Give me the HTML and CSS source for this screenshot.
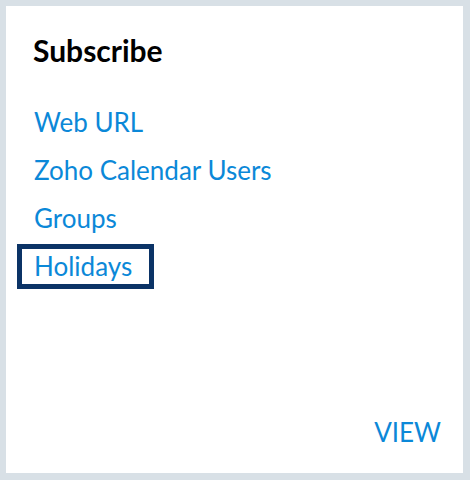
FILE: index.html
```html
<!DOCTYPE html>
<html>
<head>
<meta charset="utf-8">
<link rel="stylesheet" href="styles.css">
</head>
<body>
<div class="card">
  <h2 class="title">Subscribe</h2>
  <ul class="links">
    <li><a class="link" href="#">Web URL</a></li>
    <li><a class="link" href="#">Zoho Calendar Users</a></li>
    <li><a class="link" href="#">Groups</a></li>
    <li><a class="link focused" href="#">Holidays</a></li>
  </ul>
  <div class="footer"><a class="view" href="#">VIEW</a></div>
</div>
</body>
</html>
```
FILE: styles.css
```css
html, body {
  margin: 0;
  padding: 0;
  background: #d8e0e6;
  font-family: Lato, "Open Sans", sans-serif;
}
body {
  padding: 6px 7px 7px 6px;
  height: 480px;
  box-sizing: border-box;
}
.card {
  background: #ffffff;
  height: 100%;
  box-sizing: border-box;
  padding: 26px 22px 25px 27px;
  display: flex;
  flex-direction: column;
}
.title {
  margin: 0;
  font-size: 30px;
  font-weight: 700;
  line-height: normal;
  color: #000;
}
.links {
  list-style: none;
  margin: 32px 0 0 0;
  padding: 0;
  display: flex;
  flex-direction: column;
  gap: 3px;
  align-items: flex-start;
}
.link {
  display: inline-block;
  font-size: 26px;
  line-height: 35px;
  color: #0b88d8;
  text-decoration: none;
  padding: 0 17px 0 12px;
  margin-left: -16px;
  border: 5px solid transparent;
}
.link.focused {
  border-color: #0b3366;
}
.footer {
  margin-top: auto;
  display: flex;
  justify-content: flex-end;
}
.view {
  font-size: 26px;
  color: #0b88d8;
  text-decoration: none;
  line-height: normal;
}
```
